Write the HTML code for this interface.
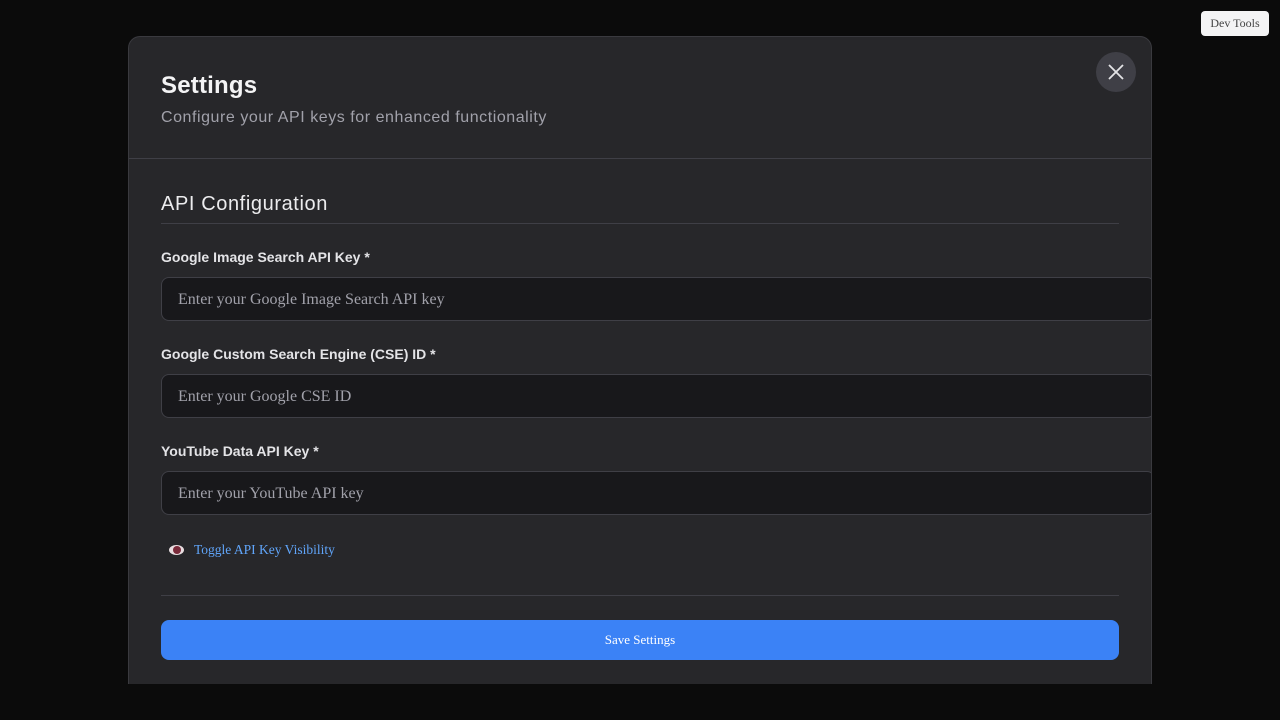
<!DOCTYPE html>
<html><head><meta charset="utf-8"><style>
*{box-sizing:border-box;margin:0;padding:0}
body{width:1280px;height:720px;background:#0b0b0b;overflow:hidden;position:relative;font-family:"Liberation Sans",sans-serif}
.dev{position:absolute;left:1201px;top:11px;width:68px;height:25px;background:#f4f4f5;border-radius:4px;font-family:"Liberation Serif",serif;font-size:12px;color:#444;text-align:center;line-height:25px}
.modal{position:absolute;left:128px;top:36px;width:1024px;height:648px;background:#27272a;border:1px solid #3a3a3f;border-bottom:none;border-radius:12px 12px 0 0;overflow:hidden}
.close{position:absolute;left:967px;top:15px;width:40px;height:40px;border-radius:50%;background:#3f3f46}
h1{position:absolute;left:32px;top:35px;font-size:24px;font-weight:bold;color:#f4f4f5;letter-spacing:0.2px}
.sub{position:absolute;left:32px;top:72px;font-size:16px;color:#a1a1aa;letter-spacing:0.55px}
.hr{position:absolute;left:0;top:121px;width:100%;height:1px;background:#3f3f46}
h2{position:absolute;left:32px;top:156px;font-size:20px;font-weight:normal;color:#ececee;letter-spacing:0.6px}
.line{position:absolute;left:32px;width:958px;height:1px;background:#3f3f46}
.lab{position:absolute;left:32px;font-size:14px;font-weight:bold;color:#e4e4e7}
.inp{position:absolute;left:32px;width:994px;height:44px;background:#18181b;border:1px solid #3f3f46;border-radius:8px;font-family:"Liberation Serif",serif;font-size:16px;color:#a1a1aa;padding-left:16px;line-height:43px}
.tog{position:absolute;left:65px;top:505px;font-family:"Liberation Serif",serif;font-size:13.5px;color:#60a5fa}
.eye{position:absolute;left:40px;top:508px;width:15px;height:10px;border-radius:50%;background:#e8dde0}
.eye:after{content:"";position:absolute;left:4px;top:1px;width:8px;height:8px;border-radius:50%;background:#7a2a3a}
.btn{position:absolute;left:32px;top:583px;width:958px;height:40px;background:#3b82f6;border-radius:8px;color:#fff;font-family:"Liberation Serif",serif;font-size:13px;text-align:center;line-height:40px}
</style></head><body>
<div class="dev">Dev Tools</div>
<div class="modal">
<div class="close"><svg width="40" height="40"><path d="M13 13L27 27M27 13L13 27" stroke="#e4e4e7" stroke-width="1.8"/></svg></div>
<h1>Settings</h1>
<div class="sub">Configure your API keys for enhanced functionality</div>
<div class="hr"></div>
<h2>API Configuration</h2>
<div class="line" style="top:186px"></div>
<div class="lab" style="top:212px">Google Image Search API Key *</div>
<div class="inp" style="top:240px">Enter your Google Image Search API key</div>
<div class="lab" style="top:309px">Google Custom Search Engine (CSE) ID *</div>
<div class="inp" style="top:337px">Enter your Google CSE ID</div>
<div class="lab" style="top:406px">YouTube Data API Key *</div>
<div class="inp" style="top:434px">Enter your YouTube API key</div>
<div class="eye"></div>
<div class="tog">Toggle API Key Visibility</div>
<div class="line" style="top:558px"></div>
<div class="btn">Save Settings</div>
</div>
</body></html>
